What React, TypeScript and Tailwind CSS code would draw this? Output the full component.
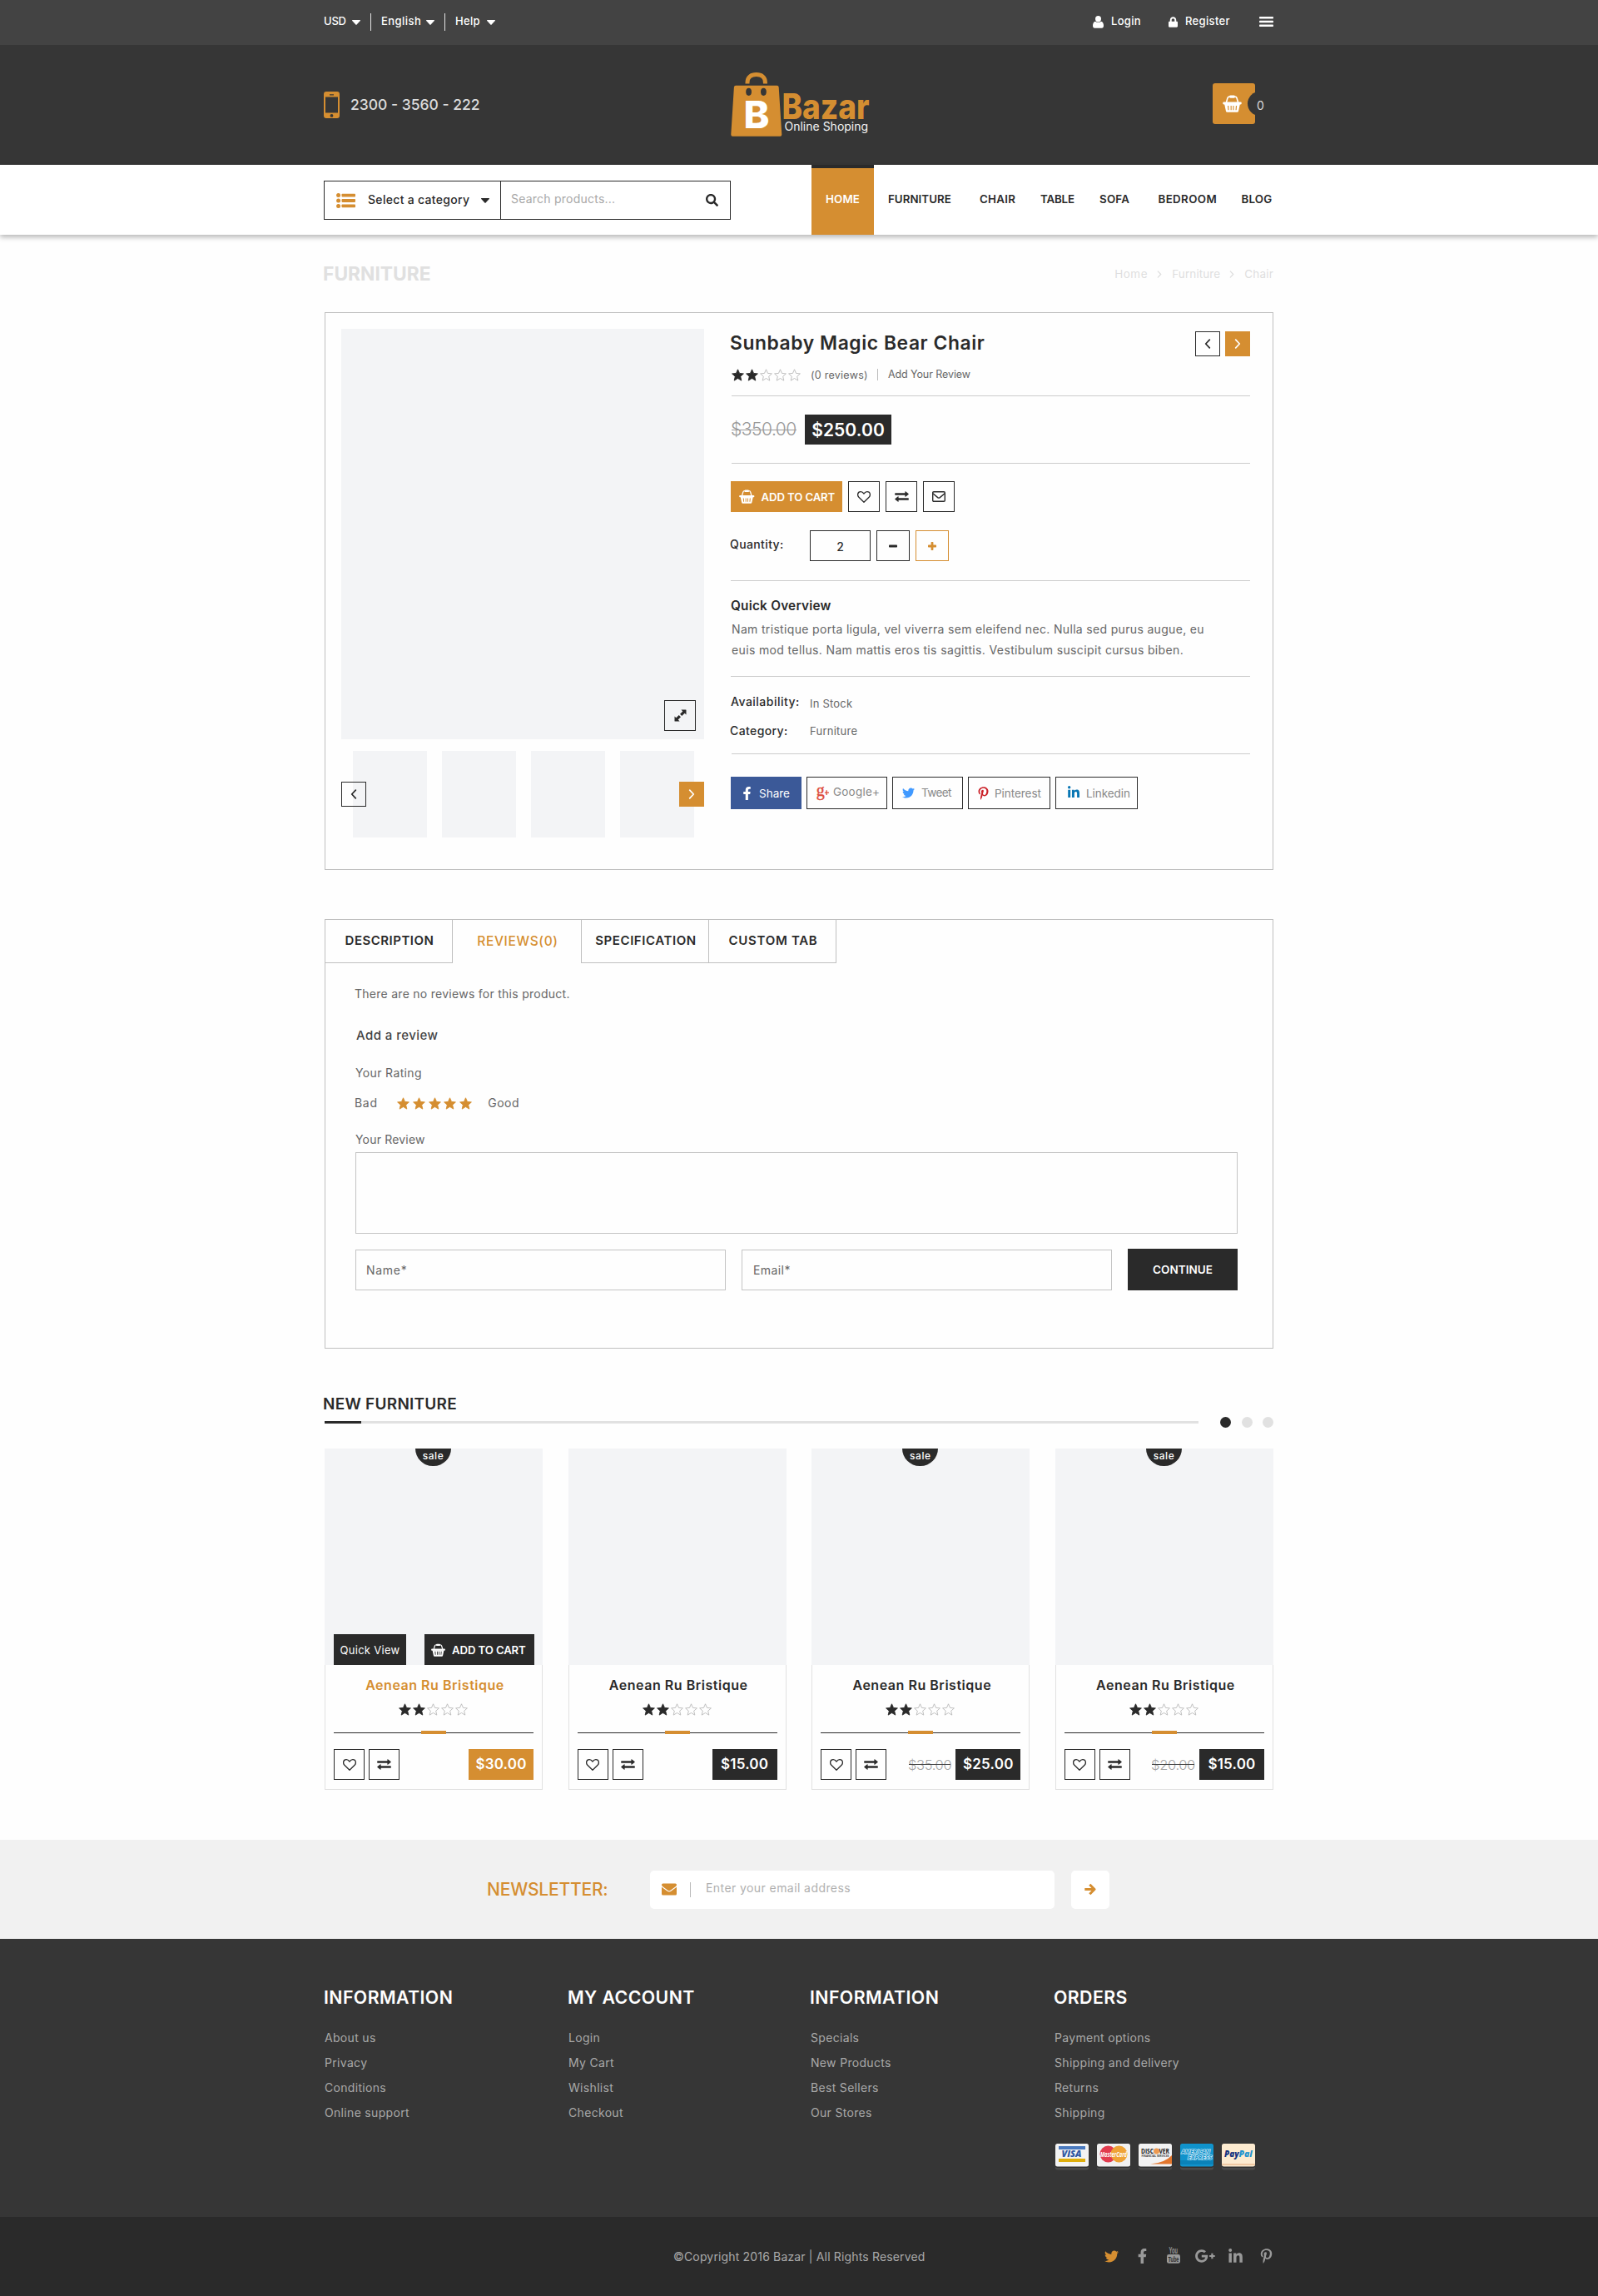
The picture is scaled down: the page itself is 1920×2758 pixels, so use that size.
import type { ReactNode } from "react";
import { FaFacebookF, FaLinkedinIn, FaLock, FaPinterestP, FaSearch, FaTwitter } from "react-icons/fa";

/* ---------- icons ---------- */

function Caret({ className = "" }: { className?: string }) {
  return (
    <svg viewBox="0 0 10 6" className={"h-[6px] w-[10px] shrink-0 " + className} fill="currentColor">
      <path d="M.6 0h8.8c.6 0 .8.6.4 1L5.6 5.6c-.3.4-.9.4-1.2 0L.2 1C-.2.6 0 0 .6 0z" />
    </svg>
  );
}

function Angle({ dir, className = "" }: { dir: "left" | "right"; className?: string }) {
  return (
    <svg viewBox="0 0 8 12" className={"shrink-0 " + className} fill="none" stroke="currentColor" strokeWidth="1.7" strokeLinejoin="round" strokeLinecap="round">
      <path d={dir === "left" ? "M6.300 1.200 1.700 6l4.600 4.800" : "M1.700 1.200 6.300 6l-4.600 4.800"} />
    </svg>
  );
}

function Basket({ className = "" }: { className?: string }) {
  return (
    <svg viewBox="0 0 24 22" className={"shrink-0 " + className} fill="currentColor">
      <path d="M4.600 9.500 6.200 4Q6.800 2.200 8.600 2.200h6.800q1.800 0 2.400 1.800l1.600 5.500" fill="none" stroke="currentColor" strokeWidth="1.700" />
      <rect x="8.600" y=".6" width="6.800" height="3.400" rx="1.200" />
      <rect x=".2" y="9" width="23.600" height="3" rx="1.200" />
      <path
        fillRule="evenodd"
        d="M2.200 11.500h19.600l-1.900 9q-.3 1.300-1.600 1.300H5.700q-1.300 0-1.600-1.300zM6.200 13.600l.5 5.400h1.200l-.4-5.400zM10 13.600v5.400h1.200v-5.400zM12.900 13.600v5.400h1.200v-5.400zM16.600 13.600l-.4 5.400h1.200l.5-5.400z"
      />
    </svg>
  );
}

function Exchange() {
  return (
    <svg viewBox="0 0 17 13" className="h-[13px] w-[17px] shrink-0" fill="currentColor">
      <path d="M.6 2.300h11.800V.6q0-.7.6-.3l3.500 2.800q.5.400 0 .8L13 6.700q-.6.400-.6-.3V4.700H.6Q.2 4.700.2 4.300V2.700q0-.4.4-.4z" />
      <path d="M16.400 8.300H4.600V6.600q0-.7-.6-.3L.5 9.100q-.5.400 0 .8L4 12.700q.6.400.6-.3v-1.700h11.800q.4 0 .4-.4V8.700q0-.4-.4-.4z" />
    </svg>
  );
}

function HeartOutline() {
  return (
    <svg viewBox="0 0 16 14" className="h-[14px] w-[16px] shrink-0" fill="none" stroke="currentColor" strokeWidth="1.300" strokeLinejoin="round">
      <path d="M8 13.300 1.900 7.300C.9 6.200.6 5.300.6 4.300.6 2.100 2.100.7 4.200.7 5.800.7 7 1.600 8 3 9 1.600 10.200.7 11.800.7c2.100 0 3.600 1.400 3.600 3.600 0 1-.3 1.900-1.300 3z" />
    </svg>
  );
}

function MailOutline() {
  return (
    <svg viewBox="0 0 16 13" className="h-[13px] w-[16px] shrink-0" fill="none" stroke="currentColor" strokeWidth="1.400" strokeLinejoin="round">
      <rect x=".7" y=".7" width="14.600" height="11.600" rx="1.200" />
      <path d="M.9 2.800 6.700 7.600q1.300 1 2.600 0L15.100 2.800" />
    </svg>
  );
}

function MailSolid() {
  return (
    <svg viewBox="0 0 18 14" className="h-[15px] w-[18px] shrink-0" fill="currentColor">
      <path d="M0 1.500Q0 0 1.500 0h15Q18 0 18 1.500 18 2.600 17 3.400L10.600 8.200q-1.600 1.100-3.200 0L1 3.400Q0 2.600 0 1.500z" />
      <path d="M0 4.300v8.200Q0 14 1.500 14h15q1.500 0 1.500-1.500V4.300L11.200 9.300q-2.200 1.500-4.400 0z" />
    </svg>
  );
}

function Arrow() {
  return (
    <svg viewBox="0 0 14 14" className="h-[15px] w-[14px]" fill="none" stroke="currentColor" strokeWidth="3" strokeLinejoin="round">
      <path d="M.3 7h11.200M6.300 1.300 12 7l-5.700 5.700" />
    </svg>
  );
}

const STAR = "M7.500.8l2 4.600 4.900.5-3.700 3.300 1.100 4.900-4.300-2.600-4.300 2.600 1.100-4.900L.6 5.900l4.900-.5z";

function Star({ filled }: { filled: boolean }) {
  return (
    <svg viewBox="0 0 15 15" className="h-[15px] w-[15px] shrink-0">
      <path
        d={STAR}
        fill={filled ? "currentColor" : "none"}
        stroke={filled ? "currentColor" : "#b9b9b9"}
        strokeWidth={filled ? 0.9 : 0.9}
        strokeLinejoin="round"
      />
    </svg>
  );
}

function Rating({ value }: { value: number }) {
  return (
    <div className="flex gap-[2px] text-[#2a2a2a]">
      {[1, 2, 3, 4, 5].map((n) => (
        <Star key={n} filled={n <= value} />
      ))}
    </div>
  );
}

function Phone() {
  return (
    <svg viewBox="0 0 19 32" className="h-[32px] w-[19px] shrink-0" fill="#d58e31">
      <path
        fillRule="evenodd"
        d="M3 0h13q3 0 3 3v26q0 3-3 3H3q-3 0-3-3V3q0-3 3-3zM2 6.600v19h15v-19zM7 3.200v1.300h5V3.200zM9.500 27a1.900 1.900 0 1 0 0 3.800 1.900 1.900 0 0 0 0-3.800z"
      />
    </svg>
  );
}

function Logo() {
  return (
    <svg viewBox="0 0 172 78" className="h-[78px] w-[172px] shrink-0 overflow-visible">
      <path d="M20 13.500V12C20 5.500 24.500 2.600 30.700 2.600S41.400 5.500 41.400 12v1.500" fill="none" stroke="#d58e31" strokeWidth="5" />
      <path d="M6 15.800h49.500q2 0 2.200 2L61.300 74.500q.1 2.200-2 2.200H2.300Q.2 76.700.3 74.500L3.900 17.800q.2-2 2.100-2z" fill="#d58e31" />
      <ellipse cx="21.600" cy="23.300" rx="3.400" ry="4.600" fill="#363636" />
      <ellipse cx="39.400" cy="23.300" rx="3.400" ry="4.600" fill="#363636" />
      <text x="15.500" y="67" fontFamily="Inter" fontWeight="800" fontSize="45" fill="#fff" textLength="31" lengthAdjust="spacingAndGlyphs">
        B
      </text>
      <text x="61.500" y="56" fontFamily="Inter" fontWeight="800" fontSize="42" fill="#d58e31" textLength="105" lengthAdjust="spacingAndGlyphs">
        Bazar
      </text>
      <text x="64.500" y="69.500" fontFamily="Inter" fontSize="14" fill="#f4f4f4">
        Online Shoping
      </text>
    </svg>
  );
}

function User() {
  return (
    <svg viewBox="0 0 13 15" className="h-[15px] w-[13px] shrink-0" fill="currentColor">
      <ellipse cx="6.500" cy="3.800" rx="3.500" ry="3.700" />
      <path d="M3 6.700Q6.500 9.500 10 6.700q3 .8 3 5.100 0 3-2.300 3H2.300Q0 14.800 0 11.800q0-4.300 3-5.100z" />
    </svg>
  );
}

function Bars() {
  return (
    <svg viewBox="0 0 17 12" className="h-[12px] w-[17px] shrink-0" fill="currentColor">
      <rect width="17" height="2.600" rx=".8" />
      <rect y="4.700" width="17" height="2.600" rx=".8" />
      <rect y="9.400" width="17" height="2.600" rx=".8" />
    </svg>
  );
}

function List() {
  return (
    <svg viewBox="0 0 23 18" className="h-[18px] w-[23px] shrink-0" fill="#d58e31">
      {[2.6, 9, 15.4].map((y) => (
        <g key={y}>
          <circle cx="2.600" cy={y} r="2.500" />
          <rect x="6.500" y={y - 1.9} width="16.500" height="3.800" rx=".8" />
        </g>
      ))}
    </svg>
  );
}

function Expand() {
  return (
    <svg viewBox="0 0 15 15" className="h-[15px] w-[15px]" fill="#2a2a2a">
      <path d="M8.400.5H14q.5 0 .5.500v5.600L12.600 4.700 9.300 8 7 5.700l3.300-3.300zM6.600 14.500H1q-.5 0-.5-.5V8.400l1.900 1.900L5.700 7 8 9.300l-3.300 3.300z" />
    </svg>
  );
}

function Minus() {
  return (
    <svg viewBox="0 0 10 10" className="h-[10px] w-[10px]" fill="currentColor">
      <rect y="3.500" width="10" height="3" rx=".8" />
    </svg>
  );
}

function Plus() {
  return (
    <svg viewBox="0 0 10 10" className="h-[10px] w-[10px]" fill="currentColor">
      <rect y="3.600" width="10" height="2.800" rx=".7" />
      <rect x="3.600" width="2.800" height="10" rx=".7" />
    </svg>
  );
}

function GooglePlusOld() {
  return (
    <svg viewBox="0 0 15 17" className="h-[17px] w-[15px] shrink-0 overflow-visible" fill="#dd4b39">
      <text x="-.3" y="11.800" fontFamily="Liberation Serif" fontSize="20" stroke="#dd4b39" strokeWidth=".4">
        g
      </text>
      <path d="M11.500 5.200h1.300v2.300h2.200v1.300h-2.200V11h-1.300V8.800H9.900V7.500h1.600z" />
    </svg>
  );
}

function Youtube() {
  return (
    <svg viewBox="0 0 16 20" className="h-[20px] w-[16px] shrink-0 overflow-visible" fill="#999">
      <text x="2.600" y="8" fontFamily="Liberation Sans" fontWeight="700" fontSize="10" textLength="10.500" lengthAdjust="spacingAndGlyphs">
        You
      </text>
      <rect y="9" width="16" height="10.800" rx="2.400" />
      <text x="1.600" y="17.800" fontFamily="Liberation Sans" fontWeight="700" fontSize="9" fill="#2a2a2a" textLength="12.800" lengthAdjust="spacingAndGlyphs">
        Tube
      </text>
    </svg>
  );
}

function GPlus() {
  return (
    <svg viewBox="0 0 24 16" className="h-[16px] w-[24px] shrink-0" fill="#999">
      <path d="M7.800 6.700h7.300c.1.500.1.900.1 1.400 0 4.400-3 7.600-7.400 7.600C3.500 15.700.1 12.300.1 8S3.500.3 7.800.3c2.100 0 3.800.8 5.200 2l-2.100 2c-.6-.5-1.600-1.200-3.100-1.200-2.600 0-4.800 2.200-4.800 4.900s2.200 4.900 4.800 4.900c3.100 0 4.200-2.200 4.400-3.400H7.800z" />
      <path d="M19.300 4.700h2.200v2.200h2.200v2.200h-2.200v2.200h-2.200V9.100h-2.200V6.900h2.200z" />
    </svg>
  );
}

/* ---------- payment cards ---------- */

function PayCard({ bg, children }: { bg: string; children: ReactNode }) {
  return (
    <svg viewBox="0 0 40 32" className="h-[32px] w-[40px]">
      <rect y="3" width="40" height="28.500" rx="2.500" fill="#4a4a4a" />
      <rect y="1" width="40" height="28" rx="2.500" fill="#1f1f1f" opacity=".6" />
      <rect width="40" height="27.500" rx="2.500" fill={bg} />
      {children}
    </svg>
  );
}

function Payments() {
  return (
    <div className="ml-px flex gap-[10px]">
      <PayCard bg="#f3f3f3">
        <rect x="4" y="3" width="32" height="4" fill="#4a7abf" />
        <rect x="4" y="18" width="32" height="4" fill="#dfae0c" />
        <text x="7.500" y="16.300" fontFamily="Open Sans" fontStyle="italic" fontWeight="800" fontSize="11" fill="#2f56a3" textLength="24" lengthAdjust="spacingAndGlyphs">
          VISA
        </text>
      </PayCard>
      <PayCard bg="#f1f1f1">
        <circle cx="13.500" cy="12.500" r="10" fill="#e23b4e" />
        <circle cx="26.500" cy="12.500" r="10" fill="#efa336" />
        <text x="4" y="15.500" fontFamily="Open Sans" fontStyle="italic" fontWeight="700" fontSize="8" fill="#fff" textLength="32" lengthAdjust="spacingAndGlyphs">
          MasterCard
        </text>
      </PayCard>
      <PayCard bg="#f3f3f3">
        <path d="M14 24.500Q31 23.500 40 14v10.500z" fill="#e3762c" />
        <circle cx="21.500" cy="9" r="3.500" fill="#ee9a50" />
        <text x="3" y="11.800" fontFamily="Open Sans" fontWeight="700" fontSize="8" fill="#222" textLength="15" lengthAdjust="spacingAndGlyphs">
          DISC
        </text>
        <text x="24.500" y="11.800" fontFamily="Open Sans" fontWeight="700" fontSize="8" fill="#222" textLength="12.500" lengthAdjust="spacingAndGlyphs">
          VER
        </text>
        <text x="3.500" y="15.500" fontFamily="Open Sans" fontWeight="700" fontSize="3" fill="#444" textLength="33" lengthAdjust="spacingAndGlyphs">
          FINANCIAL SERVICES
        </text>
      </PayCard>
      <PayCard bg="#1093cc">
        <rect y="20" width="40" height="5" fill="#0b82b8" />
        <g fontFamily="Open Sans" fontStyle="italic" fontWeight="700" fontSize="6.500" fill="#1093cc" stroke="#d4eefa" strokeWidth="1.200" paintOrder="stroke">
          <text x="1.500" y="11.500" textLength="34.500" lengthAdjust="spacingAndGlyphs">
            AMERICAN
          </text>
          <text x="9" y="19" textLength="29" lengthAdjust="spacingAndGlyphs">
            EXPRESS
          </text>
        </g>
      </PayCard>
      <PayCard bg="#fdebd0">
        <rect y="24" width="40" height="2" fill="#f0c9a3" />
        <text x="3" y="16" fontFamily="Open Sans" fontStyle="italic" fontWeight="800" fontSize="10" fill="#14317f" textLength="17.500" lengthAdjust="spacingAndGlyphs">
          Pay
        </text>
        <text x="20.500" y="16" fontFamily="Open Sans" fontStyle="italic" fontWeight="800" fontSize="10" fill="#1f93cf" textLength="16" lengthAdjust="spacingAndGlyphs">
          Pal
        </text>
      </PayCard>
    </div>
  );
}

/* ---------- shared pieces ---------- */

function IconBox({ children }: { children: ReactNode }) {
  return (
    <button className="flex h-[37px] w-[38px] items-center justify-center border border-[#2a2a2a] text-[#2a2a2a]">{children}</button>
  );
}

/* ---------- header ---------- */

function TopBar() {
  return (
    <div className="h-[54px] bg-[#434343] text-[13px] font-medium text-white">
      <div className="mx-auto flex h-[52px] w-[1140px] items-center justify-between">
        <div className="-ml-px flex items-center">
          <span className="w-[34px] tracking-[-0.2px]">USD</span>
          <Caret className="mt-[2px]" />
          <span className="mr-[12px] ml-[12px] h-[21px] w-px bg-[#e5e5e5]" />
          <span className="w-[54px] tracking-[0.46px]">English</span>
          <Caret className="mt-[2px]" />
          <span className="mr-[12px] ml-[12px] h-[21px] w-px bg-[#e5e5e5]" />
          <span className="w-[38px] tracking-[0.3px]">Help</span>
          <Caret className="mt-[2px]" />
        </div>
        <div className="flex items-center">
          <User />
          <span className="ml-[9px] w-[69px] tracking-[0.32px]">Login</span>
          <FaLock className="mt-px h-[13px] w-[11px]" />
          <span className="ml-[9px] w-[89px] tracking-[0.34px]">Register</span>
          <Bars />
        </div>
      </div>
    </div>
  );
}

function Masthead() {
  return (
    <div className="h-[144px] bg-[#363636]">
      <div className="mx-auto flex h-[143px] w-[1140px] items-center">
        <div className="-ml-px flex w-[489px] items-center">
          <Phone />
          <span className="ml-[13px] pt-px text-[17.500px] font-medium text-[#dcdcdc]">2300 - 3560 - 222</span>
        </div>
        <div className="w-[579px]">
          <Logo />
        </div>
        <div className="relative -mt-[3px] flex h-[49px] w-[51px] items-center overflow-hidden rounded-[3px] bg-[#d58e31] text-white">
          <Basket className="ml-[12px] h-[21px] w-[23px]" />
          <span className="absolute top-[10.500px] right-[-20px] h-[29px] w-[29px] rounded-full bg-[#363636]" />
        </div>
        <span className="ml-[2px] pt-px text-[14px] text-[#dcdcdc]">0</span>
      </div>
    </div>
  );
}

function NavBar() {
  return (
    <div className="relative h-[84px] bg-white shadow-[0_3px_6px_rgba(0,0,0,0.28)]">
      <div className="mx-auto flex w-[1140px]">
        <div className="mt-[19px] -ml-px flex h-[47px] w-[489px] border border-[#2a2a2a]">
          <div className="flex w-[212px] items-center border-r border-[#2a2a2a] pl-[14px]">
            <List />
            <span className="ml-[15px] w-[138px] pb-[2px] text-[14px] font-medium tracking-[0.31px] text-[#2a2a2a]">Select a category</span>
            <Caret className="-ml-[2px] text-[#2a2a2a]" />
          </div>
          <div className="flex flex-1 items-center justify-between pr-[14px] pl-[12px]">
            <span className="pb-[4px] text-[14px] tracking-[0.23px] text-[#a8a8a8]">Search products...</span>
            <FaSearch className="h-[15px] w-[15px] text-[#2a2a2a]" />
          </div>
        </div>
        <div className="ml-[97px] flex h-[84px] w-[75px] items-center justify-center border-t-4 border-[#2a2a2a] bg-[#d58e31] pb-[4px] text-[13.300px] font-semibold tracking-[0.15px] text-white">
          HOME
        </div>
        <nav className="ml-[17px] flex h-[83px] flex-1 items-center text-[13.300px] font-semibold whitespace-nowrap text-[#2a2a2a]">
          <span className="w-[110px] shrink-0 tracking-[0.05px]">FURNITURE</span>
          <span className="w-[73px] shrink-0 tracking-[0.3px]">CHAIR</span>
          <span className="w-[71px] shrink-0 tracking-[-0.15px]">TABLE</span>
          <span className="w-[70.500px] shrink-0 tracking-[0.25px]">SOFA</span>
          <span className="w-[100px] shrink-0 tracking-[0.4px]">BEDROOM</span>
          <span className="shrink-0 tracking-[0.2px]">BLOG</span>
        </nav>
      </div>
    </div>
  );
}

/* ---------- product ---------- */

function Gallery() {
  return (
    <div className="mt-[19px] ml-[19px] w-[436px]">
      <div className="relative h-[493px] bg-[#f3f4f6]">
        <button className="absolute right-[10px] bottom-[10px] flex h-[37px] w-[38px] items-center justify-center border border-[#2a2a2a]">
          <Expand />
        </button>
      </div>
      <div className="relative mt-[14px] flex h-[104px] justify-between pr-[12px] pl-[14px]">
        {[1, 2, 3, 4].map((n) => (
          <div key={n} className="w-[89px] bg-[#f3f4f6]" />
        ))}
        <button className="absolute top-[37px] left-0 flex h-[30px] w-[30px] items-center justify-center border border-[#2a2a2a]">
          <Angle dir="left" className="h-[12px] w-[8px] text-[#2a2a2a]" />
        </button>
        <button className="absolute top-[37px] right-0 flex h-[30px] w-[30px] items-center justify-center bg-[#d58e31]">
          <Angle dir="right" className="h-[12px] w-[8px] text-white" />
        </button>
      </div>
    </div>
  );
}

function ProductInfo() {
  return (
    <div className="ml-[32px] w-[624px] text-[#2a2a2a]">
      <div className="ml-px h-[100px] border-b border-[#ccc]">
        <div className="flex h-[52px] items-end justify-between">
          <h1 className="-ml-[2px] flex h-[32px] items-center text-[22.800px] font-semibold tracking-[0.6px] whitespace-nowrap">
            Sunbaby Magic Bear Chair
          </h1>
          <div className="flex gap-[6px]">
            <button className="flex h-[30px] w-[30px] items-center justify-center border border-[#2a2a2a]">
              <Angle dir="left" className="h-[12px] w-[8px]" />
            </button>
            <button className="flex h-[30px] w-[30px] items-center justify-center bg-[#d58e31] text-white">
              <Angle dir="right" className="h-[12px] w-[8px]" />
            </button>
          </div>
        </div>
        <div className="mt-[14px] flex h-[16px] items-center text-[12.500px] text-[#666]">
          <Rating value={2} />
          <span className="ml-[12px] pt-[2px] tracking-[0.26px]">(0 reviews)</span>
          <span className="ml-[11px] h-[14px] w-px bg-[#bbb]" />
          <span className="ml-[12px] tracking-[-0.08px]">Add Your Review</span>
        </div>
      </div>

      <div className="ml-px flex h-[81px] border-b border-[#ccc] pt-[22px]">
        <div className="relative -ml-px flex h-[36px] items-center text-[21px] font-light tracking-[-0.5px] text-[#999]">
          $350.00
          <span className="absolute right-0 left-px h-px bg-[#999]" />
        </div>
        <div className="ml-auto flex h-[36px] w-[104px] items-center justify-center bg-[#2a2a2a] pt-px text-[21px] font-semibold tracking-[0.1px] text-white">
          $250.00
        </div>
        <div className="w-[431px]" />
      </div>

      <div className="h-[141px] border-b border-[#ccc] pt-[21px]">
        <div className="flex gap-[7px]">
          <button className="flex h-[37px] w-[134px] items-center bg-[#d58e31] pl-[10px] text-[13.200px] font-semibold tracking-[-0.12px] whitespace-nowrap text-white">
            <Basket className="mr-[8px] h-[17px] w-[18.500px]" />
            <span className="pt-[2px]">ADD TO CART</span>
          </button>
          <IconBox>
            <HeartOutline />
          </IconBox>
          <IconBox>
            <Exchange />
          </IconBox>
          <IconBox>
            <MailOutline />
          </IconBox>
        </div>
        <div className="mt-[22px] flex items-center">
          <span className="-ml-px w-[96px] pb-[4px] text-[14px] font-medium tracking-[0.38px]">Quantity:</span>
          <span className="flex h-[37px] w-[73px] items-center justify-center border border-[#2a2a2a] pt-px text-[14px] font-medium">2</span>
          <button className="ml-[7px] flex h-[37px] w-[40px] items-center justify-center border border-[#2a2a2a]">
            <Minus />
          </button>
          <button className="ml-[7px] flex h-[37px] w-[40px] items-center justify-center border border-[#d58e31] text-[#d58e31]">
            <Plus />
          </button>
        </div>
      </div>

      <div className="h-[115px] border-b border-[#ccc] pt-[20px]">
        <h2 className="h-[20px] text-[15.300px] leading-[20px] font-semibold tracking-[0.25px]">Quick Overview</h2>
        <p className="mt-[5px] ml-px text-[14px] leading-[25px] whitespace-nowrap text-[#666]">
          <span className="tracking-[0.33px]">Nam tristique porta ligula, vel viverra sem eleifend nec. Nulla sed purus augue, eu</span>
          <br />
          <span className="tracking-[0.36px]">euis mod tellus. Nam mattis eros tis sagittis. Vestibulum suscipit cursus biben.</span>
        </p>
      </div>

      <div className="ml-px h-[93px] border-b border-[#ccc] pt-[12px] text-[14px] leading-[35px]">
        <div className="flex">
          <span className="-ml-px w-[95px] font-medium tracking-[0.48px]">Availability:</span>
          <span className="mt-[3px] -mb-[3px] text-[13px] tracking-[0.21px] text-[#666]">In Stock</span>
        </div>
        <div className="flex">
          <span className="-ml-[2px] w-[96px] font-medium tracking-[0.39px]">Category:</span>
          <span className="mt-px text-[13px] tracking-[0.25px] text-[#666]">Furniture</span>
        </div>
      </div>

      <div className="mt-[27px] flex text-[13.500px] text-[#888]">
        <button className="flex h-[39px] w-[85px] items-center bg-[#3b5998] pl-[14px] text-white">
          <FaFacebookF className="mr-[9px] h-[16px] w-[11px]" />
          <span className="pt-[2px]">Share</span>
        </button>
        <button className="ml-[6px] flex h-[39px] w-[97px] items-center border border-[#2a2a2a] pl-[11px]">
          <GooglePlusOld />
          <span className="ml-[5px] pb-[3px] tracking-[0.22px]">Google+</span>
        </button>
        <button className="ml-[6px] flex h-[39px] w-[85px] items-center border border-[#2a2a2a] pl-[11px]">
          <FaTwitter className="h-[15px] w-[15px] text-[#4099ff]" />
          <span className="ml-[8px] tracking-[-0.6px]">Tweet</span>
        </button>
        <button className="ml-[6px] flex h-[39px] w-[99px] items-center border border-[#2a2a2a] pl-[11px]">
          <FaPinterestP className="h-[16px] w-[13px] text-[#cb2027]" />
          <span className="ml-[7px] pt-[2px] tracking-[-0.05px]">Pinterest</span>
        </button>
        <button className="ml-[6px] flex h-[39px] w-[99px] items-center border border-[#2a2a2a] pl-[13px]">
          <FaLinkedinIn className="mb-px h-[16px] w-[16px] text-[#0976b4]" />
          <span className="ml-[7px] pt-[2px] tracking-[-0.06px]">Linkedin</span>
        </button>
      </div>
    </div>
  );
}

/* ---------- reviews ---------- */

function Tabs() {
  const base = "flex items-center justify-center pl-[2px]";
  return (
    <div className="flex h-[52px] text-[15px] font-semibold text-[#2a2a2a]">
      <div className={base + " w-[153px] border-r border-b border-[#bfbfbf] tracking-[0.5px]"}>DESCRIPTION</div>
      <div className={base + " w-[154px] text-[15.500px] font-medium tracking-[0.65px] text-[#d58e31]"}>REVIEWS(0)</div>
      <div className={base + " w-[154px] border-x border-b border-[#bfbfbf] tracking-[0.58px]"}>SPECIFICATION</div>
      <div className={base + " w-[153px] border-r border-b border-[#bfbfbf] tracking-[0.7px]"}>CUSTOM TAB</div>
    </div>
  );
}

function Reviews() {
  return (
    <section className="mx-auto mt-[59px] h-[516px] w-[1140px] border border-[#bfbfbf]">
      <Tabs />
      <div className="ml-[36px] w-[1060px] text-[14px] leading-[20px] text-[#666]">
        <p className="-ml-px pt-[27px] tracking-[0.27px]">There are no reviews for this product.</p>
        <p className="mt-[30px] ml-px text-[15px] font-medium tracking-[0.45px] text-[#444]">Add a review</p>
        <p className="mt-[25px] tracking-[0.36px]">Your Rating</p>
        <div className="mt-[16px] -ml-px flex items-center">
          <span className="w-[51px] tracking-[0.7px]">Bad</span>
          <div className="flex gap-[3.800px] text-[#d58e31]">
            {[1, 2, 3, 4, 5].map((n) => (
              <Star key={n} filled />
            ))}
          </div>
          <span className="ml-[19px] tracking-[0.5px]">Good</span>
        </div>
        <p className="mt-[24px] tracking-[0.18px]">Your Review</p>
        <div className="mt-[5px] h-[98px] border border-[#c4c4c4]" />
        <div className="mt-[18px] flex">
          <div className="mt-px flex h-[49px] w-[445px] items-center border border-[#c4c4c4] pl-[12px] tracking-[0.7px]">Name*</div>
          <div className="mt-px ml-[19px] flex h-[49px] w-[445px] items-center border border-[#c4c4c4] pl-[13px] tracking-[0.42px]">Email*</div>
          <button className="ml-[19px] flex h-[50px] w-[132px] items-center justify-center bg-[#2a2a2a] text-[13.500px] font-semibold tracking-[0.06px] text-white">
            CONTINUE
          </button>
        </div>
      </div>
    </section>
  );
}

/* ---------- product cards ---------- */

type Product = { sale?: boolean; hover?: boolean; price: string; old?: string };

const products: Product[] = [
  { sale: true, hover: true, price: "$30.00" },
  { price: "$15.00" },
  { sale: true, price: "$25.00", old: "$35.00" },
  { sale: true, price: "$15.00", old: "$20.00" },
];

function Card({ p }: { p: Product }) {
  return (
    <article className="flex h-[410px] w-[262px] flex-col">
      <div className="relative flex h-[260px] items-end bg-[#f3f4f6]">
        {p.sale && (
          <div className="absolute top-0 left-[109px] flex h-[21px] w-[43px] items-center justify-center rounded-b-full bg-[#2a2a2a] pb-[4px] text-[12px] leading-[17px] font-medium tracking-[0.57px] text-white">
            sale
          </div>
        )}
        {p.hover && (
          <div className="flex w-full pr-[10px] pl-[11px] text-[13px] whitespace-nowrap text-white">
            <button className="flex h-[37px] w-[87px] items-center justify-center bg-[#2a2a2a] pt-[2px] tracking-[0.28px]">Quick View</button>
            <button className="ml-[22px] flex h-[37px] w-[132px] items-center bg-[#2a2a2a] pl-[8px] text-[13.200px] font-semibold tracking-[-0.12px]">
              <Basket className="mr-[8px] h-[16px] w-[17px]" />
              <span className="pt-[2px]">ADD TO CART</span>
            </button>
          </div>
        )}
      </div>
      <div className="flex flex-1 flex-col items-center border-x border-b border-[#e1e1e1] px-[10px] pt-[12px]">
        <h3
          className={
            "ml-[3px] h-[24px] text-[16px] leading-[24px] font-semibold tracking-[0.53px] " + (p.hover ? "text-[#d58e31]" : "text-[#2a2a2a]")
          }
        >
          Aenean Ru Bristique
        </h3>
        <div className="mt-[10px] mr-px">
          <Rating value={2} />
        </div>
        <div className="mt-[18px] flex h-[4px] w-full items-center">
          <span className="h-px w-[105px] bg-[#2a2a2a]" />
          <span className="h-[4px] w-[30px] bg-[#d58e31]" />
          <span className="h-px w-[105px] bg-[#2a2a2a]" />
        </div>
        <div className="mt-[18px] flex w-full items-center">
          <button className="flex h-[37px] w-[37px] items-center justify-center border border-[#2a2a2a] text-[#2a2a2a]">
            <HeartOutline />
          </button>
          <button className="ml-[5px] flex h-[37px] w-[37px] items-center justify-center border border-[#2a2a2a] text-[#2a2a2a]">
            <Exchange />
          </button>
          {p.old && (
            <span className="relative ml-auto flex h-[37px] items-center pt-px text-[16.500px] font-light tracking-[-0.35px] text-[#a5a5a5]">
              {p.old}
              <span className="absolute top-[18px] right-px left-px h-px bg-[#444]" />
            </span>
          )}
          <span
            className={
              "flex h-[37px] w-[78px] items-center justify-center pt-px text-[17px] font-semibold tracking-[0.2px] text-white " +
              (p.old ? "ml-[5px] " : "ml-auto ") +
              (p.hover ? "bg-[#d58e31]" : "bg-[#2a2a2a]")
            }
          >
            {p.price}
          </span>
        </div>
      </div>
    </article>
  );
}

function NewFurniture() {
  return (
    <section className="mx-auto w-[1140px] pt-[55px]">
      <h2 className="-ml-[2px] h-[24px] text-[19px] leading-[24px] font-semibold tracking-[0.25px] text-[#2a2a2a]">NEW FURNITURE</h2>
      <div className="mt-[3px] flex h-[13px] items-center">
        <span className="h-[3px] w-[44px] bg-[#2a2a2a]" />
        <span className="h-[3px] w-[1006px] bg-[#e1e1e1]" />
        <span className="ml-[26px] h-[13px] w-[13px] rounded-full bg-[#2a2a2a]" />
        <span className="ml-[13px] h-[13px] w-[13px] rounded-full bg-[#e1e1e1]" />
        <span className="ml-[12px] h-[13px] w-[13px] rounded-full bg-[#e1e1e1]" />
      </div>
      <div className="mt-[25px] flex justify-between">
        {products.map((p, i) => (
          <Card key={i} p={p} />
        ))}
      </div>
    </section>
  );
}

/* ---------- newsletter and footer ---------- */

function Newsletter() {
  return (
    <section className="mt-[60px] h-[119px] bg-[#f1f1f1]">
      <div className="mx-auto flex h-full w-[1140px] items-center pl-[195px]">
        <span className="w-[196px] pt-px text-[21px] font-medium tracking-[-0.2px] text-[#d58e31]">NEWSLETTER:</span>
        <div className="flex h-[46px] w-[486px] items-center rounded-[5px] bg-white pl-[14px] text-[#d58e31]">
          <MailSolid />
          <span className="ml-[16px] h-[18px] w-px bg-[#bbb]" />
          <span className="ml-[18px] pb-[4px] text-[14px] tracking-[0.42px] text-[#b0b0b0]">Enter your email address</span>
        </div>
        <button className="ml-[20px] flex h-[46px] w-[46px] items-center justify-center rounded-[5px] bg-white text-[#d58e31]">
          <Arrow />
        </button>
      </div>
    </section>
  );
}

const columns = [
  { title: "INFORMATION", width: "w-[293px]", links: ["About us", "Privacy", "Conditions", "Online support"] },
  { title: "MY ACCOUNT", width: "w-[291px]", links: ["Login", "My Cart", "Wishlist", "Checkout"] },
  { title: "INFORMATION", width: "w-[293px]", links: ["Specials", "New Products", "Best Sellers", "Our Stores"] },
  { title: "ORDERS", width: "w-[262px]", links: ["Payment options", "Shipping and delivery", "Returns", "Shipping"] },
];

function Footer() {
  return (
    <footer>
      <div className="h-[334px] bg-[#363636] pt-[58px]">
        <div className="mx-auto flex w-[1140px]">
          {columns.map((c, i) => (
            <div key={i} className={c.width}>
              <h4 className="-ml-px h-[24px] text-[21.300px] leading-[24px] font-semibold tracking-[0.42px] text-white">{c.title}</h4>
              <ul className="mt-[22px] text-[14px] leading-[30px] tracking-[0.32px] text-[#a9a9a9]">
                {c.links.map((l) => (
                  <li key={l}>{l}</li>
                ))}
              </ul>
              {i === 3 && (
                <div className="mt-[22px]">
                  <Payments />
                </div>
              )}
            </div>
          ))}
        </div>
      </div>
      <div className="h-[95px] bg-[#2a2a2a]">
        <div className="mx-auto flex h-[94px] w-[1140px] items-center text-[#999]">
          <span className="ml-[419px] w-[518px] text-[14px] tracking-[0.16px] text-[#a9a9a9]">©Copyright 2016 Bazar | All Rights Reserved</span>
          <FaTwitter className="h-[17px] w-[17px] text-[#d58e31]" />
          <FaFacebookF className="ml-[22px] h-[18px] w-[13px]" />
          <span className="ml-[23px] -mt-[2px]">
            <Youtube />
          </span>
          <span className="ml-[18px]">
            <GPlus />
          </span>
          <FaLinkedinIn className="ml-[15px] h-[19px] w-[19px]" />
          <FaPinterestP className="ml-[20px] h-[18px] w-[15px]" />
        </div>
      </div>
    </footer>
  );
}

export default function App() {
  return (
    <div className="w-[1920px] bg-[#fefefe] font-['Inter',sans-serif]">
      <TopBar />
      <Masthead />
      <NavBar />
      <div className="mx-auto flex h-[93px] w-[1140px] items-center justify-between pt-[2px]">
        <h2 className="-ml-[2px] text-[22.800px] font-bold text-[#e0e0e0]">FURNITURE</h2>
        <div className="flex items-center text-[13.500px] text-[#dedede]">
          <span className="w-[51px] tracking-[0.5px]">Home</span>
          <Angle dir="right" className="h-[9px] w-[6px]" />
          <span className="ml-[12px] w-[69px] tracking-[0.1px]">Furniture</span>
          <Angle dir="right" className="h-[9px] w-[6px]" />
          <span className="ml-[12px] tracking-[0.2px]">Chair</span>
        </div>
      </div>
      <section className="mx-auto flex h-[670px] w-[1140px] border border-[#bfbfbf]">
        <Gallery />
        <ProductInfo />
      </section>
      <Reviews />
      <NewFurniture />
      <Newsletter />
      <Footer />
    </div>
  );
}
